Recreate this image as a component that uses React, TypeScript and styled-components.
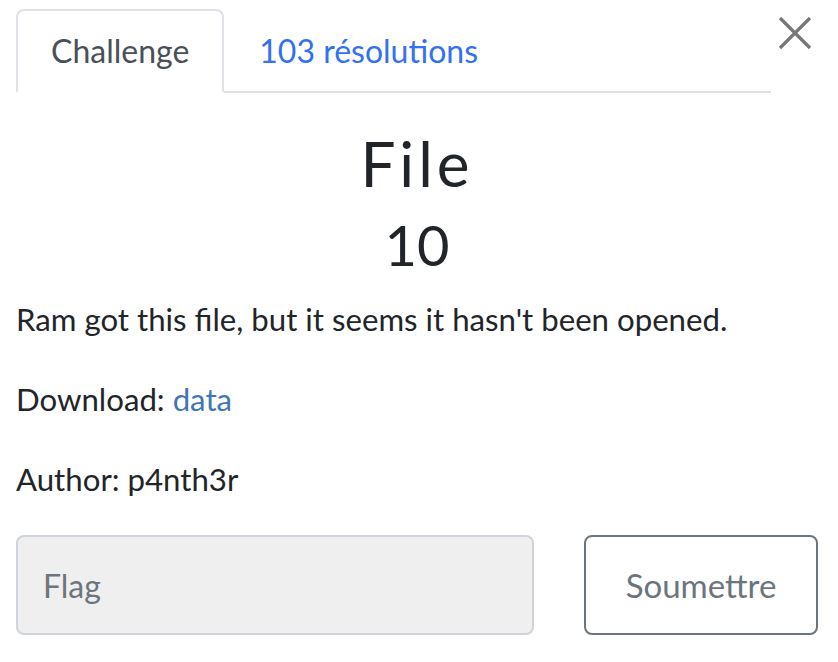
import React from 'react';
import styled, { createGlobalStyle } from 'styled-components';

const GlobalStyle = createGlobalStyle`
	html, body {
		margin: 0;
		padding: 0;
		background: #fff;
	}
	body {
		font-family: Lato, 'Open Sans', sans-serif;
		color: #212529;
	}
	* {
		box-sizing: border-box;
	}
`;

const Modal = styled.div`
	width: 838px;
	height: 662px;
	padding: 9px 20px 0 16px;
	background: #fff;
`;
const Header = styled.div`
	display: flex;
	flex-direction: row;
	align-items: flex-start;
`;
const Tabs = styled.ul`
	flex: 1;
	display: flex;
	flex-direction: row;
	margin: 0;
	padding: 0;
	list-style: none;
	border-bottom: 2px solid #dee2e6;
`;
const TabItem = styled.li<{ $active?: boolean }>`
	margin-bottom: -2px;
	a {
		display: block;
		padding: 16px 33px;
		font-size: 32px;
		line-height: 48px;
		text-decoration: none;
		border: 2px solid ${({ $active }) => ($active ? '#dee2e6' : 'transparent')};
		border-bottom-color: ${({ $active }) => ($active ? '#fff' : 'transparent')};
		border-radius: 8px 8px 0 0;
		background: ${({ $active }) => ($active ? '#fff' : 'transparent')};
		color: ${({ $active }) => ($active ? '#495057' : '#3370f2')};
	}
`;
const Close = styled.button`
	width: 47px;
	height: 34px;
	margin: 7px 0 0 0;
	padding: 0 6px 0 7px;
	border: 0;
	background: transparent;
	display: flex;
	align-items: center;
	justify-content: center;
	cursor: pointer;
`;
const Body = styled.div`
	padding-top: 28px;
`;
const Title = styled.h3`
	margin: 0;
	text-align: center;
	font-size: 62px;
	line-height: 84px;
	font-weight: 400;
	letter-spacing: 4px;
`;
const Value = styled.h4`
	margin: 6px 0 16px;
	text-align: center;
	font-size: 56px;
	line-height: 68px;
	font-weight: 400;
`;
const Text = styled.p`
	margin: 0 0 32px;
	font-size: 31.2px;
	line-height: 48px;
	a {
		color: #3f76b4;
		text-decoration: none;
	}
`;
const Form = styled.form`
	display: flex;
	flex-direction: row;
	gap: 50px;
	margin-top: 26px;
`;
const FlagInput = styled.input`
	flex: 1;
	height: 100px;
	padding: 0 25px;
	font-family: Lato, sans-serif;
	font-size: 32px;
	color: #495057;
	background: #efefef;
	border: 2px solid #ced4da;
	border-radius: 8px;
	outline: none;
	&::placeholder {
		color: #6c757d;
	}
`;
const Submit = styled.button`
	width: 234px;
	height: 100px;
	font-family: Lato, sans-serif;
	font-size: 33px;
	color: #6c757d;
	background: #fff;
	border: 2px solid #6c757d;
	border-radius: 8px;
	cursor: pointer;
`;

const App: React.FunctionComponent = () => {
	return (
		<>
			<GlobalStyle />
			<Modal>
				<Header>
					<Tabs>
						<TabItem $active>
							<a href="#challenge">Challenge</a>
						</TabItem>
						<TabItem>
							<a href="#solves">103 résolutions</a>
						</TabItem>
					</Tabs>
					<Close aria-label="Close">
						<svg width="34" height="34" viewBox="0 0 34 34">
							<path d="M2 2 L32 32 M32 2 L2 32" stroke="#777" strokeWidth="3.2" />
						</svg>
					</Close>
				</Header>
				<Body>
					<Title>File</Title>
					<Value>10</Value>
					<Text>Ram got this file, but it seems it hasn't been opened.</Text>
					<Text>
						Download: <a href="#data">data</a>
					</Text>
					<Text>Author: p4nth3r</Text>
					<Form onSubmit={(e) => e.preventDefault()}>
						<FlagInput placeholder="Flag" />
						<Submit type="submit">Soumettre</Submit>
					</Form>
				</Body>
			</Modal>
		</>
	);
};

export default App;
